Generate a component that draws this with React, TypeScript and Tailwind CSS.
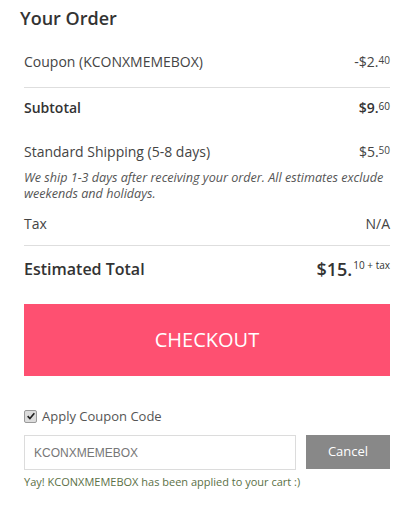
const font = { fontFamily: '"Open Sans", "Liberation Sans", sans-serif' };

function Price({ main, cents, suffix, big }: { main: string; cents: string; suffix?: string; big?: boolean }) {
  return (
    <span className="flex items-start">
      <span className={big ? 'text-[18px] leading-6' : 'text-[14px] leading-5'}>{main}</span>
      <span className={big ? 'text-[10px] leading-4 ml-[1px] font-normal' : 'text-[10px] leading-4 font-normal'}>
        {cents}
        {suffix}
      </span>
    </span>
  );
}

export default function App() {
  return (
    <div className="w-[418px] h-[509px] bg-white text-[#444]" style={font}>
      <h1 className="pl-5 mt-[6px] text-[18px] leading-6 font-semibold text-[#333]">Your Order</h1>

      <div className="pl-6 pr-[28px]">
        {/* coupon */}
        <div className="mt-[22px] flex justify-between items-center text-[14px] leading-5">
          <span>Coupon (KCONXMEMEBOX)</span>
          <Price main="-$2." cents="40" />
        </div>
        <div className="mt-[15px] border-t border-[#dedede]" />

        <div className="mt-[10px] flex justify-between items-center text-[14px] leading-5 font-semibold text-[#333]">
          <span>Subtotal</span>
          <Price main="$9." cents="60" />
        </div>

        <div className="mt-[24px] flex justify-between items-center text-[14px] leading-5">
          <span>Standard Shipping (5-8 days)</span>
          <Price main="$5." cents="50" />
        </div>
        <p className="mt-[8px] text-[12.6px] leading-4 italic text-[#555] whitespace-nowrap">
          We ship 1-3 days after receiving your order. All estimates exclude
          <br />
          weekends and holidays.
        </p>

        <div className="mt-[12px] flex justify-between items-center text-[14px] leading-5">
          <span>Tax</span>
          <span>N/A</span>
        </div>
        <div className="mt-[11px] border-t border-[#dedede]" />

        <div className="mt-[11px] flex justify-between items-center font-semibold text-[#333]">
          <span className="text-[16px] leading-6">Estimated Total</span>
          <Price main="$15." cents="10" suffix=" + tax" big />
        </div>

        <button className="mt-[23px] w-full h-[72px] bg-[#fe5071] text-white text-[20px]">
          CHECKOUT
        </button>

        <label className="mt-[30px] flex items-center gap-[5px] text-[13px] leading-5 text-[#555]">
          <span className="w-[13px] h-[13px] rounded-[2px] border border-[#9a9a9a] bg-[#dcdcdc] flex items-center justify-center">
            <svg viewBox="0 0 12 12" className="w-[10px] h-[10px]">
              <path d="M2 6.2 L4.7 9 L10 2.8" fill="none" stroke="#222" strokeWidth="2" />
            </svg>
          </span>
          Apply Coupon Code
        </label>

        <div className="mt-[9px] flex gap-[10px]">
          <input
            defaultValue="KCONXMEMEBOX"
            className="w-[272px] h-[35px] border border-[#dcdcdc] px-[9px] text-[12px] text-[#777] outline-none"
            style={{ fontFamily: '"Liberation Sans", Arial, sans-serif' }}
          />
          <button className="flex-1 h-[34px] bg-[#888888] text-white text-[13px]">Cancel</button>
        </div>

        <p className="mt-[5px] text-[11px] leading-[14px] text-[#5b7046]">
          Yay! KCONXMEMEBOX has been applied to your cart :)
        </p>
      </div>
    </div>
  );
}
